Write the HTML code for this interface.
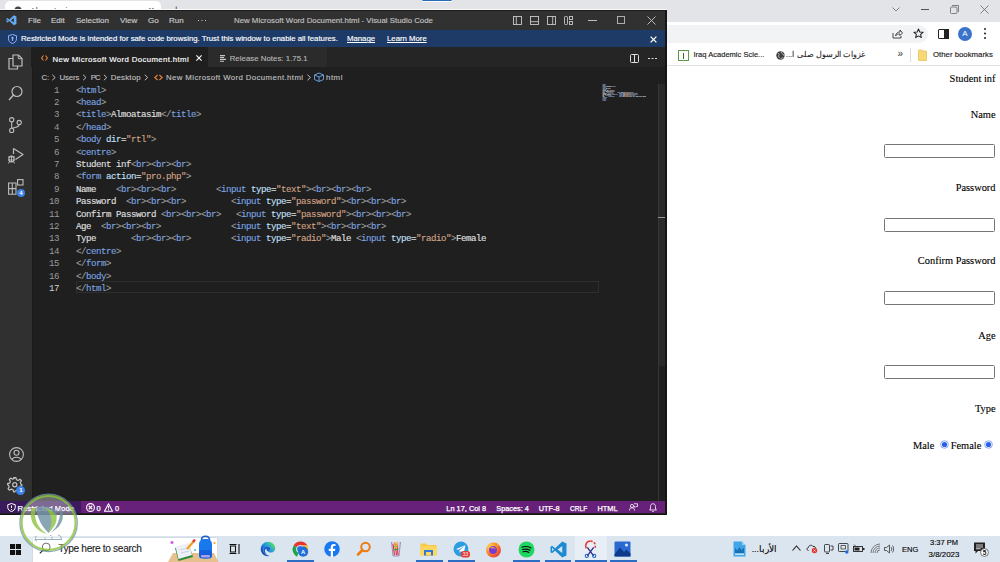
<!DOCTYPE html>
<html><head><meta charset="utf-8">
<style>
*{margin:0;padding:0;box-sizing:border-box}
html,body{width:1000px;height:562px;overflow:hidden;background:#fff;font-family:"Liberation Sans",sans-serif;position:relative}
.a{position:absolute;white-space:nowrap}
svg{position:absolute;overflow:visible}
#vsc{left:0;top:10px;width:666px;height:504px;background:#1f1f1f;overflow:hidden}
.menu,.bn,.tab,.st{-webkit-text-stroke:0.15px currentColor}
.menu{top:5px;font-size:8px;line-height:11px;color:#cccccc}
.bn{top:23px;font-size:7.77px;line-height:11px;color:#fff}
.tab{font-size:7.8px;line-height:11px;top:43.5px;color:#fff}
.bc{font-size:7.8px;line-height:11px;top:61.7px;color:#c4c4c4;-webkit-text-stroke:0.1px currentColor}
.st{font-size:7.4px;line-height:11px;top:492.5px;color:#fff;-webkit-text-stroke:0.25px #fff}
.code{position:absolute;left:76px;top:74.5px;font-family:"Liberation Mono",monospace;font-size:9.1px;letter-spacing:-0.46px;line-height:12.4px;white-space:pre;color:#e0e0e0;-webkit-text-stroke:0.12px currentColor}
.ln{position:absolute;left:39.5px;width:19.5px;top:74.5px;text-align:right;font-family:"Liberation Mono",monospace;font-size:9.1px;letter-spacing:-0.46px;line-height:12.4px;white-space:pre;color:#9a9a9a}
.t{color:#7ca5e2}.p{color:#9c9c9c}.at{color:#c4e0fa}.s{color:#d6a486}
.pg{font-family:"Liberation Serif",serif;font-size:10.4px;line-height:12px;color:#000;text-align:right;-webkit-text-stroke:0.12px #000}
.inp{left:884px;width:111px;height:13.5px;border:1px solid #767676;border-radius:1.5px;background:#fff}
.tb{font-size:7.5px;line-height:10px;color:#000;-webkit-text-stroke:0.12px #000}
</style></head><body>
<!-- CHROME -->
<div class="a" style="left:0;top:0;width:1000px;height:22px;background:#e3e4e8"></div>
<div class="a" style="left:5px;top:0.5px;width:156px;height:12px;background:#fff;border-radius:5px 5px 0 0"></div>
<svg style="left:14px;top:6px" width="8" height="8" viewBox="0 0 16 16"><circle cx="8" cy="8" r="7" fill="#444"/></svg>
<div class="a" style="left:30px;top:6px;font-size:8.5px;line-height:10px;color:#333">Almoatasim</div>
<div class="a" style="left:148px;top:6px;font-size:8px;line-height:10px;color:#333">✕</div>
<div class="a" style="left:173px;top:3px;font-size:11px;line-height:12px;color:#333">+</div>
<div class="a" style="left:667px;top:22px;width:333px;height:22px;background:#fff"></div>
<div class="a" style="left:421px;top:-3px;width:32px;height:4.5px;background:#2a6fb8;border:1px solid #fff;border-radius:2px"></div>
<div class="a" style="left:0;top:9px;width:667px;height:1px;background:#fafafa"></div>
<div class="a" style="left:667px;top:25px;width:261px;height:17.5px;background:#f1f3f4;border-radius:0 9px 9px 0"></div>
<!-- window controls -->
<svg style="left:892px;top:7px" width="8" height="5" viewBox="0 0 8 5"><path d="M0.5 0.5 L4 4 L7.5 0.5" fill="none" stroke="#777" stroke-width="0.9"/></svg>
<div class="a" style="left:921px;top:9px;width:8px;height:0.8px;background:#555"></div>
<svg style="left:950px;top:5px" width="9" height="9" viewBox="0 0 9 9"><rect x="0.5" y="2" width="6.5" height="6.5" fill="none" stroke="#666" stroke-width="0.8" rx="1"/><path d="M2 0.5 H8.5 V7" fill="none" stroke="#666" stroke-width="0.8"/></svg>
<svg style="left:980px;top:5px" width="9" height="9" viewBox="0 0 9 9"><path d="M0.5 0.5 L8.5 8.5 M8.5 0.5 L0.5 8.5" stroke="#666" stroke-width="0.8"/></svg>
<!-- toolbar icons -->
<svg style="left:892px;top:29px" width="11" height="10" viewBox="0 0 22 20"><path d="M2 8 V18 H18 V14" fill="none" stroke="#444" stroke-width="2"/><path d="M7 14 C8 8 12 6 16 6 V2 L21 8 L16 13 V10 C12 10 9 11 7 14 Z" fill="none" stroke="#444" stroke-width="2" stroke-linejoin="round"/></svg>
<svg style="left:913px;top:28px" width="11" height="11" viewBox="0 0 24 24"><path d="M12 2 L14.9 8.6 L22 9.3 L16.6 14 L18.2 21 L12 17.3 L5.8 21 L7.4 14 L2 9.3 L9.1 8.6 Z" fill="none" stroke="#222" stroke-width="2.2" stroke-linejoin="round"/></svg>
<div class="a" style="left:938px;top:29px;width:11px;height:10px;border:1.5px solid #222;border-radius:1px"></div>
<div class="a" style="left:944px;top:29px;width:5px;height:10px;background:#222"></div>
<div class="a" style="left:958px;top:27px;width:14px;height:14px;border-radius:50%;background:#3a73c9;color:#fff;font-size:8px;line-height:14px;text-align:center">A</div>
<div class="a" style="left:984px;top:28px;width:2px;height:2px;border-radius:50%;background:#222;box-shadow:0 4.5px 0 #222,0 9px 0 #222"></div>
<!-- bookmarks -->
<div class="a" style="left:667px;top:44px;width:333px;height:22px;background:#fff;border-bottom:1px solid #e3e3e3"></div>
<div class="a" style="left:678px;top:50px;width:11px;height:11px;border:1px solid #5a9a4a;background:#fff"></div>
<div class="a" style="left:683px;top:52.5px;width:1.2px;height:6px;background:#2d6a2a"></div>
<div class="a" style="left:693.5px;top:50px;font-size:7.55px;line-height:10px;color:#222;-webkit-text-stroke:0.15px #222">Iraq Academic Scie...</div>
<svg style="left:776px;top:50.8px" width="9" height="9" viewBox="0 0 20 20"><circle cx="10" cy="10" r="9.3" fill="#3c3c3c"/><path d="M4 5 C7 6 8 8 6 10 C4.5 12 7 13 8 16 M12 1.5 C11 4 13 6 15 6.5 C17 7 16.5 10 18.5 11 M11 18.5 C11.5 15.5 13.5 14 16.5 15.5" fill="none" stroke="#fff" stroke-width="1.5"/></svg>
<div class="a" style="left:790px;top:50px;font-size:8px;line-height:10px;color:#222;-webkit-text-stroke:0.1px #222;direction:rtl;width:75px;text-align:right">غزوات الرسول صلى ا...</div>
<div class="a" style="left:897.5px;top:48.5px;font-size:10px;line-height:10px;color:#333">»</div>
<div class="a" style="left:910px;top:48px;width:1px;height:14px;background:#dadce0"></div>
<svg style="left:918px;top:49px" width="9" height="12" viewBox="0 0 9 12"><path d="M0.5 1 H4 L5 2 H8.5 V11.5 H0.5 Z" fill="#f6d877" stroke="#e8c55a" stroke-width="0.8"/></svg>
<div class="a" style="left:933px;top:50px;font-size:7.8px;line-height:10px;color:#222;-webkit-text-stroke:0.15px #222">Other bookmarks</div>
<!-- page content -->
<div class="a pg" style="left:900px;width:95.5px;top:72.5px">Student inf</div>
<div class="a pg" style="left:900px;width:95.5px;top:108.5px">Name</div>
<div class="a inp" style="top:144.2px"></div>
<div class="a pg" style="left:900px;width:95.5px;top:182px">Password</div>
<div class="a pg" style="left:900px;width:95.5px;top:255.2px">Confirm Password</div>
<div class="a inp" style="top:291px"></div>
<div class="a inp" style="top:218.2px"></div>
<div class="a pg" style="left:900px;width:95.5px;top:330.4px">Age</div>
<div class="a inp" style="top:365.3px"></div>
<div class="a pg" style="left:900px;width:95.5px;top:402.6px">Type</div>
<div class="a pg" style="left:913px;top:439.7px;text-align:left">Male</div>
<div class="a pg" style="left:950.7px;top:439.7px;text-align:left">Female</div>
<svg style="left:939.5px;top:440px" width="9" height="9" viewBox="0 0 18 18"><circle cx="9" cy="9" r="8.2" fill="#7096f0"/><circle cx="9" cy="9" r="6.6" fill="#fff"/><circle cx="9" cy="9" r="5.2" fill="#2d5ee8"/></svg>
<svg style="left:983.6999999999999px;top:440px" width="9" height="9" viewBox="0 0 18 18"><circle cx="9" cy="9" r="8.2" fill="#7096f0"/><circle cx="9" cy="9" r="6.6" fill="#fff"/><circle cx="9" cy="9" r="5.2" fill="#2d5ee8"/></svg>
<!-- VSCODE -->
<div id="vsc" class="a">
  <div class="a" style="left:0;top:0;width:666px;height:20px;background:#313131;border-top:1px solid #1c1c1c"></div>
  <svg style="left:6px;top:4.7px" width="11" height="10.5" viewBox="0 0 100 100"><path d="M72 3 L97 15 V85 L72 97 L30 58 L12 72 L3 66 V34 L12 28 L30 42 Z M72 29 L45 50 L72 71 Z M12 40 V60 L23 50 Z" fill="#66acf5" fill-rule="evenodd"/></svg>
  <div class="a menu" style="left:28px">File</div>
  <div class="a menu" style="left:51px">Edit</div>
  <div class="a menu" style="left:76px">Selection</div>
  <div class="a menu" style="left:120px">View</div>
  <div class="a menu" style="left:148px">Go</div>
  <div class="a menu" style="left:169px">Run</div>
  <div class="a" style="left:197.5px;top:9.5px;width:1.3px;height:1.3px;background:#ccc;box-shadow:3.5px 0 0 #ccc,7px 0 0 #ccc"></div>
  <div class="a menu" style="left:234px;font-size:7.85px;color:#c0c0c0">New Microsoft Word Document.html - Visual Studio Code</div>
  <!-- layout icons -->
  <svg style="left:513px;top:5.5px" width="9" height="9" viewBox="0 0 9 9"><rect x="0.5" y="0.5" width="8" height="8" fill="none" stroke="#c8c8c8" stroke-width="0.9"/><path d="M3.3 0.5 V8.5" stroke="#c8c8c8" stroke-width="0.9"/></svg>
  <svg style="left:530px;top:5.5px" width="9" height="9" viewBox="0 0 9 9"><rect x="0.5" y="0.5" width="8" height="8" fill="none" stroke="#c8c8c8" stroke-width="0.9"/><path d="M0.5 5.7 H8.5" stroke="#c8c8c8" stroke-width="0.9"/></svg>
  <svg style="left:547px;top:5.5px" width="9" height="9" viewBox="0 0 9 9"><rect x="0.5" y="0.5" width="8" height="8" fill="none" stroke="#c8c8c8" stroke-width="0.9"/><path d="M5.7 0.5 V8.5" stroke="#c8c8c8" stroke-width="0.9"/></svg>
  <svg style="left:564px;top:5.5px" width="9" height="9" viewBox="0 0 9 9"><rect x="0.5" y="0.5" width="3" height="8" rx="0.8" fill="none" stroke="#c8c8c8" stroke-width="0.9"/><rect x="5.5" y="0.5" width="3" height="3" fill="none" stroke="#c8c8c8" stroke-width="0.9"/><rect x="5.5" y="5.5" width="3" height="3" fill="none" stroke="#c8c8c8" stroke-width="0.9"/></svg>
  <div class="a" style="left:588px;top:10px;width:9px;height:1px;background:#bbb"></div>
  <svg style="left:617px;top:6px" width="8" height="8" viewBox="0 0 8 8"><rect x="0.5" y="0.5" width="7" height="7" fill="none" stroke="#bbb" stroke-width="0.9"/></svg>
  <svg style="left:647px;top:5.5px" width="9" height="9" viewBox="0 0 9 9"><path d="M0.5 0.5 L8.5 8.5 M8.5 0.5 L0.5 8.5" stroke="#c8c8c8" stroke-width="0.9"/></svg>

  <!-- banner -->
  <div class="a" style="left:0;top:20px;width:666px;height:17px;background:#1e3a66"></div>
  <svg style="left:8px;top:24px" width="9" height="10" viewBox="0 0 18 20"><path d="M9 1 L17 3.5 V9.5 C17 14.5 13.5 17.5 9 19 C4.5 17.5 1 14.5 1 9.5 V3.5 Z" fill="none" stroke="#8fb0ff" stroke-width="2"/><circle cx="9" cy="8" r="2.3" fill="#8fb0ff"/><path d="M7.8 9 h2.4 v5 h-2.4z" fill="#8fb0ff"/></svg>
  <div class="a bn" style="left:21px">Restricted Mode is intended for safe code browsing. Trust this window to enable all features.</div>
  <div class="a bn" style="left:347px;text-decoration:underline">Manage</div>
  <div class="a bn" style="left:387px;text-decoration:underline">Learn More</div>
  <svg style="left:649.5px;top:25.5px" width="7" height="7" viewBox="0 0 7 7"><path d="M0.6 0.6 L6.4 6.4 M6.4 0.6 L0.6 6.4" stroke="#fff" stroke-width="1.3"/></svg>

  <!-- activity bar -->
  <div class="a" style="left:0;top:37px;width:31.5px;height:454px;background:#303030"></div><div class="a" style="left:31.5px;top:37px;width:1.2px;height:454px;background:#1a1a1a"></div>
  <svg style="left:8px;top:44px" width="15" height="16" viewBox="0 0 15 16"><path d="M5 1 H10.5 L14 4.5 V12 H5 Z" fill="none" stroke="#bdbdbd" stroke-width="1.2"/><path d="M10.3 1 V4.7 H14" fill="none" stroke="#bdbdbd" stroke-width="1"/><path d="M5 4.5 H1 V15 H9.5 V12" fill="none" stroke="#bdbdbd" stroke-width="1.2"/></svg>
  <svg style="left:8px;top:75px" width="15" height="16" viewBox="0 0 15 16"><circle cx="9" cy="6.5" r="5" fill="none" stroke="#bdbdbd" stroke-width="1.2"/><path d="M5.5 10 L1 15" stroke="#bdbdbd" stroke-width="1.3"/></svg>
  <svg style="left:8px;top:107px" width="14" height="16" viewBox="0 0 14 16"><circle cx="3.7" cy="2.7" r="2.1" fill="none" stroke="#bdbdbd" stroke-width="1.1"/><circle cx="3.7" cy="13.4" r="2.1" fill="none" stroke="#bdbdbd" stroke-width="1.1"/><circle cx="11.2" cy="5.5" r="2.1" fill="none" stroke="#bdbdbd" stroke-width="1.1"/><path d="M3.7 4.8 V11.3 M11.2 7.6 C11 10 8 10 3.9 11.5" fill="none" stroke="#bdbdbd" stroke-width="1.1"/></svg>
  <svg style="left:7px;top:137px" width="17" height="16" viewBox="0 0 17 16"><path d="M6.5 1.5 L16 7.5 L8.5 12.5" fill="none" stroke="#bdbdbd" stroke-width="1.2" stroke-linejoin="round"/><path d="M6.5 1.5 V7" stroke="#bdbdbd" stroke-width="1.2"/><ellipse cx="4.5" cy="12" rx="2.6" ry="3" fill="none" stroke="#bdbdbd" stroke-width="1.1"/><path d="M1 10 H8 M1 13 H8 M2.5 15.5 L1 16 M6.5 15.5 L8 16 M4.5 9 V15" stroke="#bdbdbd" stroke-width="0.9"/></svg>
  <svg style="left:8px;top:168px" width="16" height="17" viewBox="0 0 16 17"><path d="M0.6 5 H8 V16.2 H0.6 Z M0.6 10.6 H8 M4.3 5 V16.2" fill="none" stroke="#bdbdbd" stroke-width="1.1"/><rect x="9.6" y="1.6" width="5.4" height="5.4" fill="none" stroke="#bdbdbd" stroke-width="1.1"/></svg>
  <div class="a" style="left:16.8px;top:178.5px;width:8px;height:8px;border-radius:50%;background:#3b82e8;color:#fff;font-size:6px;line-height:8px;text-align:center;font-weight:bold">4</div>
  <svg style="left:8.5px;top:436.5px" width="15" height="15" viewBox="0 0 15 15"><circle cx="7.5" cy="7.5" r="6.9" fill="none" stroke="#bdbdbd" stroke-width="1.1"/><circle cx="7.5" cy="5.8" r="2.5" fill="none" stroke="#bdbdbd" stroke-width="1.1"/><path d="M3 12.5 C4 9.5 11 9.5 12 12.5" fill="none" stroke="#bdbdbd" stroke-width="1.1"/></svg>
  <svg style="left:7px;top:467px" width="15.5" height="15.5" viewBox="0 0 26 26"><path d="M11 1 H15 L15.8 4.5 L18.6 5.7 L21.7 3.8 L24.2 6.3 L22.3 9.4 L23.5 12.2 L25 13 V15 L21.5 15.8 L20.3 18.6 L22.2 21.7 L19.7 24.2 L16.6 22.3 L13.8 23.5 L13 25 H11 L10.2 21.5 L7.4 20.3 L4.3 22.2 L1.8 19.7 L3.7 16.6 L2.5 13.8 L1 13 V11 L4.5 10.2 L5.7 7.4 L3.8 4.3 L6.3 1.8 L9.4 3.7 L12.2 2.5 Z" fill="none" stroke="#c4c4c4" stroke-width="2" stroke-linejoin="round"/><circle cx="13" cy="13" r="3.5" fill="none" stroke="#c4c4c4" stroke-width="2"/></svg>
  <div class="a" style="left:16.3px;top:476px;width:9px;height:9px;border-radius:50%;background:#3b82e8;color:#fff;font-size:6px;line-height:9px;text-align:center;font-weight:bold">1</div>

  <!-- tabs -->
  <div class="a" style="left:30.5px;top:37px;width:636px;height:20px;background:#252526"></div>
  <div class="a" style="left:30.5px;top:37px;width:178px;height:20px;background:#1f1f1f"></div>
  <div class="a" style="left:208px;top:37px;width:118.5px;height:20px;background:#2b2b2b"></div>
  <svg style="left:40.5px;top:44.5px" width="7" height="6" viewBox="0 0 7 6"><path d="M2.5 0.5 L0.6 3 L2.5 5.5 M4.5 0.5 L6.4 3 L4.5 5.5" fill="none" stroke="#e8803a" stroke-width="1.1"/></svg>
  <div class="a tab" style="left:52.5px;letter-spacing:0.37px">New Microsoft Word Document.html</div>
  <svg style="left:196px;top:45px" width="6" height="6" viewBox="0 0 6 6"><path d="M0.4 0.4 L5.6 5.6 M5.6 0.4 L0.4 5.6" stroke="#fff" stroke-width="1.1"/></svg>
  <svg style="left:219.5px;top:44.8px" width="6" height="7" viewBox="0 0 6 7"><path d="M0 0.6 H5 M0 2.5 H4 M0 4.4 H6 M0 6.3 H4" stroke="#c8c8c8" stroke-width="1.1"/></svg>
  <div class="a tab" style="left:229.7px;top:42.8px;color:#b4b4b4;font-size:7.8px;letter-spacing:0.04px">Release Notes: 1.75.1</div>
  <svg style="left:630px;top:43.5px" width="9" height="9" viewBox="0 0 9 9"><rect x="0.5" y="0.5" width="8" height="8" rx="1" fill="none" stroke="#ddd" stroke-width="1"/><path d="M4.5 0.5 V8.5" stroke="#ddd" stroke-width="1"/></svg>
  <div class="a" style="left:648px;top:47.5px;width:1.5px;height:1.5px;background:#ddd;box-shadow:3.5px 0 0 #ddd,7px 0 0 #ddd"></div>

  <!-- breadcrumbs -->
  <div class="a bc" style="left:41.6px;letter-spacing:-0.3px">C:</div>
  <div class="a bc" style="left:59.5px;letter-spacing:-0.09px">Users</div>
  <div class="a bc" style="left:90.7px;letter-spacing:-0.8px">PC</div>
  <div class="a bc" style="left:110.8px;letter-spacing:0.18px">Desktop</div>
  <div class="a bc" style="left:166px;letter-spacing:0.4px">New Microsoft Word Document.html</div>
  <div class="a bc" style="left:326px;letter-spacing:0.55px">html</div>
  <svg style="left:0;top:0" width="666" height="100"><g fill="none" stroke="#c0c0c0" stroke-width="1"><path d="M52.3 64.8 L55.2 67.5 L52.3 70.2"/><path d="M83.1 64.8 L86 67.5 L83.1 70.2"/><path d="M103.9 64.8 L106.8 67.5 L103.9 70.2"/><path d="M144.8 64.8 L147.7 67.5 L144.8 70.2"/><path d="M307.5 64.8 L310.4 67.5 L307.5 70.2"/></g>
  <path d="M157.6 65 L154.8 67.5 L157.6 70 M159.4 65 L162.2 67.5 L159.4 70" fill="none" stroke="#e8803a" stroke-width="1.1"/>
  <path d="M319 63 L323.5 65 V69.5 L319 71.5 L314.5 69.5 V65 Z M314.5 65 L319 67 L323.5 65 M319 67 V71.5" fill="none" stroke="#6fa8ec" stroke-width="0.9"/></svg>

  <!-- editor -->
  <div class="ln">1
2
3
4
5
6
7
8
9
10
11
12
13
14
15
16
<span style="color:#d0d0d0">17</span></div>
  <div class="a" style="left:76px;top:271.2px;width:523px;height:11.5px;border:1px solid #2e2e2e"></div>
<div class="code"><span class="p">&lt;</span><span class="t">html</span><span class="p">&gt;</span>
<span class="p">&lt;</span><span class="t">head</span><span class="p">&gt;</span>
<span class="p">&lt;</span><span class="t">title</span><span class="p">&gt;</span>Almoatasim<span class="p">&lt;/</span><span class="t">title</span><span class="p">&gt;</span>
<span class="p">&lt;/</span><span class="t">head</span><span class="p">&gt;</span>
<span class="p">&lt;</span><span class="t">body</span> <span class="at">dir</span>=<span class="s">"rtl"</span><span class="p">&gt;</span>
<span class="p">&lt;</span><span class="t">centre</span><span class="p">&gt;</span>
Student inf<span class="p">&lt;</span><span class="t">br</span><span class="p">&gt;&lt;</span><span class="t">br</span><span class="p">&gt;&lt;</span><span class="t">br</span><span class="p">&gt;</span>
<span class="p">&lt;</span><span class="t">form</span> <span class="at">action</span>=<span class="s">"pro.php"</span><span class="p">&gt;</span>
Name    <span class="p">&lt;</span><span class="t">br</span><span class="p">&gt;&lt;</span><span class="t">br</span><span class="p">&gt;&lt;</span><span class="t">br</span><span class="p">&gt;</span>        <span class="p">&lt;</span><span class="t">input</span> <span class="at">type</span>=<span class="s">"text"</span><span class="p">&gt;&lt;</span><span class="t">br</span><span class="p">&gt;&lt;</span><span class="t">br</span><span class="p">&gt;&lt;</span><span class="t">br</span><span class="p">&gt;</span>
Password  <span class="p">&lt;</span><span class="t">br</span><span class="p">&gt;&lt;</span><span class="t">br</span><span class="p">&gt;&lt;</span><span class="t">br</span><span class="p">&gt;</span>         <span class="p">&lt;</span><span class="t">input</span> <span class="at">type</span>=<span class="s">"password"</span><span class="p">&gt;&lt;</span><span class="t">br</span><span class="p">&gt;&lt;</span><span class="t">br</span><span class="p">&gt;&lt;</span><span class="t">br</span><span class="p">&gt;</span>
Confirm Password <span class="p">&lt;</span><span class="t">br</span><span class="p">&gt;&lt;</span><span class="t">br</span><span class="p">&gt;&lt;</span><span class="t">br</span><span class="p">&gt;</span>   <span class="p">&lt;</span><span class="t">input</span> <span class="at">type</span>=<span class="s">"password"</span><span class="p">&gt;&lt;</span><span class="t">br</span><span class="p">&gt;&lt;</span><span class="t">br</span><span class="p">&gt;&lt;</span><span class="t">br</span><span class="p">&gt;</span>
Age  <span class="p">&lt;</span><span class="t">br</span><span class="p">&gt;&lt;</span><span class="t">br</span><span class="p">&gt;&lt;</span><span class="t">br</span><span class="p">&gt;</span>              <span class="p">&lt;</span><span class="t">input</span> <span class="at">type</span>=<span class="s">"text"</span><span class="p">&gt;&lt;</span><span class="t">br</span><span class="p">&gt;&lt;</span><span class="t">br</span><span class="p">&gt;&lt;</span><span class="t">br</span><span class="p">&gt;</span>
Type       <span class="p">&lt;</span><span class="t">br</span><span class="p">&gt;&lt;</span><span class="t">br</span><span class="p">&gt;&lt;</span><span class="t">br</span><span class="p">&gt;</span>        <span class="p">&lt;</span><span class="t">input</span> <span class="at">type</span>=<span class="s">"radio"</span><span class="p">&gt;</span>Male <span class="p">&lt;</span><span class="t">input</span> <span class="at">type</span>=<span class="s">"radio"</span><span class="p">&gt;</span>Female
<span class="p">&lt;/</span><span class="t">centre</span><span class="p">&gt;</span>
<span class="p">&lt;/</span><span class="t">form</span><span class="p">&gt;</span>
<span class="p">&lt;/</span><span class="t">body</span><span class="p">&gt;</span>
<span class="p">&lt;/</span><span class="t">html</span><span class="p">&gt;</span></div>
  <!-- minimap -->
  <svg style="left:0;top:0" width="666" height="120"><g opacity="0.8"><rect x="602.50" y="74.0" width="0.53" height="0.8" fill="#9c9c9c"/><rect x="603.03" y="74.0" width="2.12" height="0.8" fill="#7ca5e2"/><rect x="605.15" y="74.0" width="0.53" height="0.8" fill="#9c9c9c"/><rect x="602.50" y="75.0" width="0.53" height="0.8" fill="#9c9c9c"/><rect x="603.03" y="75.0" width="2.12" height="0.8" fill="#7ca5e2"/><rect x="605.15" y="75.0" width="0.53" height="0.8" fill="#9c9c9c"/><rect x="602.50" y="76.0" width="0.53" height="0.8" fill="#9c9c9c"/><rect x="603.03" y="76.0" width="2.65" height="0.8" fill="#7ca5e2"/><rect x="605.68" y="76.0" width="0.53" height="0.8" fill="#9c9c9c"/><rect x="606.21" y="76.0" width="5.30" height="0.8" fill="#d0d0d0"/><rect x="611.51" y="76.0" width="1.06" height="0.8" fill="#9c9c9c"/><rect x="612.57" y="76.0" width="2.65" height="0.8" fill="#7ca5e2"/><rect x="615.22" y="76.0" width="0.53" height="0.8" fill="#9c9c9c"/><rect x="602.50" y="77.0" width="1.06" height="0.8" fill="#9c9c9c"/><rect x="603.56" y="77.0" width="2.12" height="0.8" fill="#7ca5e2"/><rect x="605.68" y="77.0" width="0.53" height="0.8" fill="#9c9c9c"/><rect x="602.50" y="78.0" width="0.53" height="0.8" fill="#9c9c9c"/><rect x="603.03" y="78.0" width="2.12" height="0.8" fill="#7ca5e2"/><rect x="605.68" y="78.0" width="1.59" height="0.8" fill="#c4e0fa"/><rect x="607.27" y="78.0" width="0.53" height="0.8" fill="#d0d0d0"/><rect x="607.80" y="78.0" width="2.65" height="0.8" fill="#d6a486"/><rect x="610.45" y="78.0" width="0.53" height="0.8" fill="#9c9c9c"/><rect x="602.50" y="79.0" width="0.53" height="0.8" fill="#9c9c9c"/><rect x="603.03" y="79.0" width="3.18" height="0.8" fill="#7ca5e2"/><rect x="606.21" y="79.0" width="0.53" height="0.8" fill="#9c9c9c"/><rect x="602.50" y="80.0" width="3.71" height="0.8" fill="#d0d0d0"/><rect x="606.74" y="80.0" width="1.59" height="0.8" fill="#d0d0d0"/><rect x="608.33" y="80.0" width="0.53" height="0.8" fill="#9c9c9c"/><rect x="608.86" y="80.0" width="1.06" height="0.8" fill="#7ca5e2"/><rect x="609.92" y="80.0" width="1.06" height="0.8" fill="#9c9c9c"/><rect x="610.98" y="80.0" width="1.06" height="0.8" fill="#7ca5e2"/><rect x="612.04" y="80.0" width="1.06" height="0.8" fill="#9c9c9c"/><rect x="613.10" y="80.0" width="1.06" height="0.8" fill="#7ca5e2"/><rect x="614.16" y="80.0" width="0.53" height="0.8" fill="#9c9c9c"/><rect x="602.50" y="81.0" width="0.53" height="0.8" fill="#9c9c9c"/><rect x="603.03" y="81.0" width="2.12" height="0.8" fill="#7ca5e2"/><rect x="605.68" y="81.0" width="3.18" height="0.8" fill="#c4e0fa"/><rect x="608.86" y="81.0" width="0.53" height="0.8" fill="#d0d0d0"/><rect x="609.39" y="81.0" width="4.77" height="0.8" fill="#d6a486"/><rect x="614.16" y="81.0" width="0.53" height="0.8" fill="#9c9c9c"/><rect x="602.50" y="82.0" width="2.12" height="0.8" fill="#d0d0d0"/><rect x="606.74" y="82.0" width="0.53" height="0.8" fill="#9c9c9c"/><rect x="607.27" y="82.0" width="1.06" height="0.8" fill="#7ca5e2"/><rect x="608.33" y="82.0" width="1.06" height="0.8" fill="#9c9c9c"/><rect x="609.39" y="82.0" width="1.06" height="0.8" fill="#7ca5e2"/><rect x="610.45" y="82.0" width="1.06" height="0.8" fill="#9c9c9c"/><rect x="611.51" y="82.0" width="1.06" height="0.8" fill="#7ca5e2"/><rect x="612.57" y="82.0" width="0.53" height="0.8" fill="#9c9c9c"/><rect x="617.34" y="82.0" width="0.53" height="0.8" fill="#9c9c9c"/><rect x="617.87" y="82.0" width="2.65" height="0.8" fill="#7ca5e2"/><rect x="621.05" y="82.0" width="2.12" height="0.8" fill="#c4e0fa"/><rect x="623.17" y="82.0" width="0.53" height="0.8" fill="#d0d0d0"/><rect x="623.70" y="82.0" width="3.18" height="0.8" fill="#d6a486"/><rect x="626.88" y="82.0" width="1.06" height="0.8" fill="#9c9c9c"/><rect x="627.94" y="82.0" width="1.06" height="0.8" fill="#7ca5e2"/><rect x="629.00" y="82.0" width="1.06" height="0.8" fill="#9c9c9c"/><rect x="630.06" y="82.0" width="1.06" height="0.8" fill="#7ca5e2"/><rect x="631.12" y="82.0" width="1.06" height="0.8" fill="#9c9c9c"/><rect x="632.18" y="82.0" width="1.06" height="0.8" fill="#7ca5e2"/><rect x="633.24" y="82.0" width="0.53" height="0.8" fill="#9c9c9c"/><rect x="602.50" y="83.0" width="4.24" height="0.8" fill="#d0d0d0"/><rect x="607.80" y="83.0" width="0.53" height="0.8" fill="#9c9c9c"/><rect x="608.33" y="83.0" width="1.06" height="0.8" fill="#7ca5e2"/><rect x="609.39" y="83.0" width="1.06" height="0.8" fill="#9c9c9c"/><rect x="610.45" y="83.0" width="1.06" height="0.8" fill="#7ca5e2"/><rect x="611.51" y="83.0" width="1.06" height="0.8" fill="#9c9c9c"/><rect x="612.57" y="83.0" width="1.06" height="0.8" fill="#7ca5e2"/><rect x="613.63" y="83.0" width="0.53" height="0.8" fill="#9c9c9c"/><rect x="618.93" y="83.0" width="0.53" height="0.8" fill="#9c9c9c"/><rect x="619.46" y="83.0" width="2.65" height="0.8" fill="#7ca5e2"/><rect x="622.64" y="83.0" width="2.12" height="0.8" fill="#c4e0fa"/><rect x="624.76" y="83.0" width="0.53" height="0.8" fill="#d0d0d0"/><rect x="625.29" y="83.0" width="5.30" height="0.8" fill="#d6a486"/><rect x="630.59" y="83.0" width="1.06" height="0.8" fill="#9c9c9c"/><rect x="631.65" y="83.0" width="1.06" height="0.8" fill="#7ca5e2"/><rect x="632.71" y="83.0" width="1.06" height="0.8" fill="#9c9c9c"/><rect x="633.77" y="83.0" width="1.06" height="0.8" fill="#7ca5e2"/><rect x="634.83" y="83.0" width="1.06" height="0.8" fill="#9c9c9c"/><rect x="635.89" y="83.0" width="1.06" height="0.8" fill="#7ca5e2"/><rect x="636.95" y="83.0" width="0.53" height="0.8" fill="#9c9c9c"/><rect x="602.50" y="84.0" width="3.71" height="0.8" fill="#d0d0d0"/><rect x="606.74" y="84.0" width="4.24" height="0.8" fill="#d0d0d0"/><rect x="611.51" y="84.0" width="0.53" height="0.8" fill="#9c9c9c"/><rect x="612.04" y="84.0" width="1.06" height="0.8" fill="#7ca5e2"/><rect x="613.10" y="84.0" width="1.06" height="0.8" fill="#9c9c9c"/><rect x="614.16" y="84.0" width="1.06" height="0.8" fill="#7ca5e2"/><rect x="615.22" y="84.0" width="1.06" height="0.8" fill="#9c9c9c"/><rect x="616.28" y="84.0" width="1.06" height="0.8" fill="#7ca5e2"/><rect x="617.34" y="84.0" width="0.53" height="0.8" fill="#9c9c9c"/><rect x="619.46" y="84.0" width="0.53" height="0.8" fill="#9c9c9c"/><rect x="619.99" y="84.0" width="2.65" height="0.8" fill="#7ca5e2"/><rect x="623.17" y="84.0" width="2.12" height="0.8" fill="#c4e0fa"/><rect x="625.29" y="84.0" width="0.53" height="0.8" fill="#d0d0d0"/><rect x="625.82" y="84.0" width="5.30" height="0.8" fill="#d6a486"/><rect x="631.12" y="84.0" width="1.06" height="0.8" fill="#9c9c9c"/><rect x="632.18" y="84.0" width="1.06" height="0.8" fill="#7ca5e2"/><rect x="633.24" y="84.0" width="1.06" height="0.8" fill="#9c9c9c"/><rect x="634.30" y="84.0" width="1.06" height="0.8" fill="#7ca5e2"/><rect x="635.36" y="84.0" width="1.06" height="0.8" fill="#9c9c9c"/><rect x="636.42" y="84.0" width="1.06" height="0.8" fill="#7ca5e2"/><rect x="637.48" y="84.0" width="0.53" height="0.8" fill="#9c9c9c"/><rect x="602.50" y="85.0" width="1.59" height="0.8" fill="#d0d0d0"/><rect x="605.15" y="85.0" width="0.53" height="0.8" fill="#9c9c9c"/><rect x="605.68" y="85.0" width="1.06" height="0.8" fill="#7ca5e2"/><rect x="606.74" y="85.0" width="1.06" height="0.8" fill="#9c9c9c"/><rect x="607.80" y="85.0" width="1.06" height="0.8" fill="#7ca5e2"/><rect x="608.86" y="85.0" width="1.06" height="0.8" fill="#9c9c9c"/><rect x="609.92" y="85.0" width="1.06" height="0.8" fill="#7ca5e2"/><rect x="610.98" y="85.0" width="0.53" height="0.8" fill="#9c9c9c"/><rect x="618.93" y="85.0" width="0.53" height="0.8" fill="#9c9c9c"/><rect x="619.46" y="85.0" width="2.65" height="0.8" fill="#7ca5e2"/><rect x="622.64" y="85.0" width="2.12" height="0.8" fill="#c4e0fa"/><rect x="624.76" y="85.0" width="0.53" height="0.8" fill="#d0d0d0"/><rect x="625.29" y="85.0" width="3.18" height="0.8" fill="#d6a486"/><rect x="628.47" y="85.0" width="1.06" height="0.8" fill="#9c9c9c"/><rect x="629.53" y="85.0" width="1.06" height="0.8" fill="#7ca5e2"/><rect x="630.59" y="85.0" width="1.06" height="0.8" fill="#9c9c9c"/><rect x="631.65" y="85.0" width="1.06" height="0.8" fill="#7ca5e2"/><rect x="632.71" y="85.0" width="1.06" height="0.8" fill="#9c9c9c"/><rect x="633.77" y="85.0" width="1.06" height="0.8" fill="#7ca5e2"/><rect x="634.83" y="85.0" width="0.53" height="0.8" fill="#9c9c9c"/><rect x="602.50" y="86.0" width="2.12" height="0.8" fill="#d0d0d0"/><rect x="608.33" y="86.0" width="0.53" height="0.8" fill="#9c9c9c"/><rect x="608.86" y="86.0" width="1.06" height="0.8" fill="#7ca5e2"/><rect x="609.92" y="86.0" width="1.06" height="0.8" fill="#9c9c9c"/><rect x="610.98" y="86.0" width="1.06" height="0.8" fill="#7ca5e2"/><rect x="612.04" y="86.0" width="1.06" height="0.8" fill="#9c9c9c"/><rect x="613.10" y="86.0" width="1.06" height="0.8" fill="#7ca5e2"/><rect x="614.16" y="86.0" width="0.53" height="0.8" fill="#9c9c9c"/><rect x="618.93" y="86.0" width="0.53" height="0.8" fill="#9c9c9c"/><rect x="619.46" y="86.0" width="2.65" height="0.8" fill="#7ca5e2"/><rect x="622.64" y="86.0" width="2.12" height="0.8" fill="#c4e0fa"/><rect x="624.76" y="86.0" width="0.53" height="0.8" fill="#d0d0d0"/><rect x="625.29" y="86.0" width="3.71" height="0.8" fill="#d6a486"/><rect x="629.00" y="86.0" width="0.53" height="0.8" fill="#9c9c9c"/><rect x="629.53" y="86.0" width="2.12" height="0.8" fill="#d0d0d0"/><rect x="632.18" y="86.0" width="0.53" height="0.8" fill="#9c9c9c"/><rect x="632.71" y="86.0" width="2.65" height="0.8" fill="#7ca5e2"/><rect x="635.89" y="86.0" width="2.12" height="0.8" fill="#c4e0fa"/><rect x="638.01" y="86.0" width="0.53" height="0.8" fill="#d0d0d0"/><rect x="638.54" y="86.0" width="3.71" height="0.8" fill="#d6a486"/><rect x="642.25" y="86.0" width="0.53" height="0.8" fill="#9c9c9c"/><rect x="642.78" y="86.0" width="3.18" height="0.8" fill="#d0d0d0"/><rect x="602.50" y="87.0" width="1.06" height="0.8" fill="#9c9c9c"/><rect x="603.56" y="87.0" width="3.18" height="0.8" fill="#7ca5e2"/><rect x="606.74" y="87.0" width="0.53" height="0.8" fill="#9c9c9c"/><rect x="602.50" y="88.0" width="1.06" height="0.8" fill="#9c9c9c"/><rect x="603.56" y="88.0" width="2.12" height="0.8" fill="#7ca5e2"/><rect x="605.68" y="88.0" width="0.53" height="0.8" fill="#9c9c9c"/><rect x="602.50" y="89.0" width="1.06" height="0.8" fill="#9c9c9c"/><rect x="603.56" y="89.0" width="2.12" height="0.8" fill="#7ca5e2"/><rect x="605.68" y="89.0" width="0.53" height="0.8" fill="#9c9c9c"/><rect x="602.50" y="90.0" width="1.06" height="0.8" fill="#9c9c9c"/><rect x="603.56" y="90.0" width="2.12" height="0.8" fill="#7ca5e2"/><rect x="605.68" y="90.0" width="0.53" height="0.8" fill="#9c9c9c"/></g></svg>
  <div class="a" style="left:657.5px;top:74px;width:8px;height:417px;background:#1f1f1f;border-left:1px solid #363636"></div><div class="a" style="left:658.5px;top:74px;width:7px;height:282px;background:#2a2a2a"></div>
  <div class="a" style="left:658px;top:206.5px;width:8px;height:1.5px;background:#9a9a9a"></div>

  <!-- status bar -->
  <div class="a" style="left:0;top:490.7px;width:666px;height:12.8px;background:#68217a"></div>
  <div class="a" style="left:0;top:490.7px;width:80.5px;height:12.8px;background:#3b1a5c"></div>
  <svg style="left:7px;top:492.5px" width="9" height="9" viewBox="0 0 18 18"><path d="M9 1 L16.5 3.5 V8.5 C16.5 13 13 16 9 17 C5 16 1.5 13 1.5 8.5 V3.5 Z" fill="none" stroke="#fff" stroke-width="2"/><path d="M8 5 h2 v5 h-2z M8 12 h2 v2 h-2z" fill="#fff"/></svg>
  <div class="a st" style="left:17.6px;font-size:7.76px">Restricted Mode</div>
  <svg style="left:86px;top:492.5px" width="9" height="9" viewBox="0 0 18 18"><circle cx="9" cy="9" r="7.8" fill="none" stroke="#fff" stroke-width="2.2"/><path d="M5.5 5.5 L12.5 12.5 M12.5 5.5 L5.5 12.5" stroke="#fff" stroke-width="2.2"/></svg>
  <div class="a st" style="left:96.5px">0</div>
  <svg style="left:104px;top:492.5px" width="9" height="9" viewBox="0 0 18 18"><path d="M9 1.5 L17 16.5 H1 Z" fill="none" stroke="#fff" stroke-width="2.2" stroke-linejoin="round"/><path d="M8 6 h2 v5 h-2z M8 12.5 h2 v2 h-2z" fill="#fff"/></svg>
  <div class="a st" style="left:115px">0</div>
  <div class="a st" style="left:446.3px">Ln 17, Col 8</div>
  <div class="a st" style="left:496.3px;font-size:7.3px">Spaces: 4</div>
  <div class="a st" style="left:538.8px;font-size:7.3px">UTF-8</div>
  <div class="a st" style="left:570px;font-size:6.6px">CRLF</div>
  <div class="a st" style="left:597.5px;font-size:7.35px">HTML</div>
  <svg style="left:628.7px;top:492.5px" width="9" height="9" viewBox="0 0 18 18"><circle cx="6" cy="6" r="3.2" fill="none" stroke="#fff" stroke-width="1.6"/><path d="M1 15 C1 10.5 3 9.5 6 9.5 C9 9.5 11 10.5 11 15" fill="none" stroke="#fff" stroke-width="1.6"/><path d="M10 1.5 H17 V7 H14 L12 9 V7 H10" fill="none" stroke="#fff" stroke-width="1.5"/></svg>
  <svg style="left:648.5px;top:492.5px" width="8" height="9" viewBox="0 0 16 18"><path d="M3 12 V7 C3 3.5 5 1.5 8 1.5 C11 1.5 13 3.5 13 7 V12 L15 14 H1 Z" fill="none" stroke="#fff" stroke-width="1.6" stroke-linejoin="round"/><path d="M6 16 C6.5 17.3 9.5 17.3 10 16" fill="none" stroke="#fff" stroke-width="1.6"/></svg>
</div>
<div class="a" style="left:665px;top:10px;width:2px;height:504.5px;background:#161616"></div><div class="a" style="left:0;top:513.5px;width:667px;height:1px;background:#161616"></div>
<!-- TASKBAR -->
<div class="a" style="left:0;top:535.5px;width:1000px;height:26.5px;background:#dbe5ef"></div>
<svg style="left:10px;top:543.5px" width="11" height="11" viewBox="0 0 11 11"><path d="M0 0 H5.1 V5.1 H0 Z M5.9 0 H11 V5.1 H5.9 Z M0 5.9 H5.1 V11 H0 Z M5.9 5.9 H11 V11 H5.9 Z" fill="#111"/></svg>
<div class="a" style="left:31.5px;top:536.5px;width:186px;height:25.5px;background:#fff;border:1px solid #d5dbe2;border-bottom:none"></div>
<svg style="left:38.5px;top:542px" width="12" height="12" viewBox="0 0 12 12"><circle cx="7.2" cy="5" r="3.9" fill="none" stroke="#222" stroke-width="1"/><path d="M4.4 7.8 L0.8 11.4" stroke="#222" stroke-width="1.1"/></svg>
<div class="a" style="left:58.2px;top:543.2px;font-size:10.2px;line-height:12px;color:#1a1a1a;letter-spacing:-0.35px;-webkit-text-stroke:0.1px #1a1a1a">Type here to search</div>
<!-- search illustration -->
<svg style="left:160px;top:530px" width="60" height="32" viewBox="0 0 60 32"><path d="M8 32 L13 23 H54 L58.5 32 Z" fill="#e6c08e"/><path d="M15 18 L29 14 L33 27 L18.5 31 Z" fill="#2f8a3a"/><path d="M15.5 16.5 L29 13 L32 25 L18.5 29 Z" fill="#eef0f8"/><path d="M20 20 L28 18 M21 23 L29 21" stroke="#c0c8e0" stroke-width="0.8"/><path d="M27 19 L34 11" stroke="#f0a020" stroke-width="2.4"/><path d="M33 12 L35 9.5" stroke="#e04040" stroke-width="2.4"/><path d="M10.5 12.5 L13.5 12.5 M12 11 L12 14" stroke="#d050e0" stroke-width="1.4"/><circle cx="54.5" cy="13" r="1.1" fill="#f0a020"/><circle cx="35" cy="20" r="0.9" fill="#40b0d0"/><path d="M41.5 10 C41.5 5 49.5 5 49.5 10" fill="none" stroke="#1f5fc8" stroke-width="1.6"/><rect x="39" y="9" width="13" height="19.5" rx="5" fill="#1a78ee"/><rect x="39" y="20" width="13" height="8.5" rx="3" fill="#1560d8"/><rect x="41" y="25" width="9" height="2.5" rx="1" fill="#a8a0f0"/></svg>
<!-- task view -->
<svg style="left:229px;top:544px" width="11" height="10" viewBox="0 0 11 10"><path d="M0.5 0.5 H7.5 M0.5 9.5 H7.5 M1.5 2 H6.5 V8 H1.5 Z M10 0 V10" fill="none" stroke="#111" stroke-width="1.1"/></svg>
<!-- edge -->
<svg style="left:259.5px;top:541px" width="16" height="16" viewBox="0 0 32 32"><defs><linearGradient id="eg1" x1="0.95" y1="0.3" x2="0.2" y2="0.95"><stop offset="0" stop-color="#52d86a"/><stop offset="0.35" stop-color="#25a3dc"/><stop offset="0.7" stop-color="#1670d4"/><stop offset="1" stop-color="#0d3b98"/></linearGradient></defs><path d="M16 1.5 C24.5 1.5 30.5 7.5 30.5 14.5 C30.5 19.5 27 23 22 23 C19 23 17 22 16 20.5 C18 20.5 20.5 19 20.5 16 C20.5 12.5 17.5 10.5 14 10.5 C9.5 10.5 6.5 14 6.5 18 C6.5 24 12 29 19 29.5 C17.5 30.3 16.5 30.5 16 30.5 C8 30.5 1.5 24 1.5 16 C1.5 8 8 1.5 16 1.5 Z" fill="url(#eg1)"/><path d="M6.5 18 C6.5 14 9.5 10.5 14 10.5 C17.5 10.5 20.5 12.5 20.5 16 C20.5 19 18 20.5 16 20.5 C14 20.5 12.5 19.5 12.5 18 C12.5 16.5 13.5 15.5 13.5 15.5 C10 16 9 20 11 24 C13 27.5 16 29 19 29.5 C12 29 6.5 24 6.5 18 Z" fill="#1a5fc8"/><path d="M13.5 15.5 C12.5 16.5 12.5 17.5 12.5 18 C12.5 19.5 14 20.5 16 20.5 C15 21.5 12 21 11.3 19 C10.8 17.5 12 16 13.5 15.5 Z" fill="#fff"/></svg>
<!-- chrome -->
<svg style="left:292px;top:541px" width="17" height="17" viewBox="0 0 32 32"><path d="M16 1 A15 15 0 0 1 29 8.5 H16 A7.5 7.5 0 0 0 9.5 12.2 L3 8.5 A15 15 0 0 1 16 1 Z" fill="#e8352c"/><path d="M3 8.5 L9.5 12.2 A7.5 7.5 0 0 0 12.2 22.5 L9.5 29.5 A15 15 0 0 1 3 8.5 Z" fill="#1ea446"/><path d="M29 8.5 A15 15 0 0 1 30 20 L22 20 A7.5 7.5 0 0 0 16 8.5 Z" fill="#f7c01a"/><circle cx="15" cy="15" r="6.5" fill="#2a72e0" stroke="#fff" stroke-width="1.5"/><circle cx="21" cy="20" r="9.5" fill="#1e6fd9"/><text x="21" y="25" font-size="11" fill="#fff" text-anchor="middle" font-family="Liberation Sans" font-weight="bold">A</text></svg>
<div class="a" style="left:287px;top:560px;width:26.5px;height:2px;background:#2b6cc4"></div>
<!-- facebook -->
<svg style="left:324px;top:541px" width="16" height="16" viewBox="0 0 32 32"><circle cx="16" cy="16" r="15.5" fill="#1877f2"/><path d="M18 32 V20 H22 L22.7 15.5 H18 V12.5 C18 11 18.7 10 20.5 10 H23 V6.3 C22 6.1 20.7 6 19.3 6 C15.8 6 13.6 8 13.6 12 V15.5 H9.5 V20 H13.6 V32 Z" fill="#fff"/></svg>
<!-- search orange -->
<svg style="left:356px;top:541px" width="16" height="16" viewBox="0 0 32 32"><circle cx="19" cy="12" r="8.5" fill="none" stroke="#f07a10" stroke-width="4"/><path d="M13 18 L4 27" stroke="#f07a10" stroke-width="5" stroke-linecap="round"/></svg>
<!-- winrar-ish -->
<svg style="left:390px;top:540px" width="12" height="18" viewBox="0 0 24 36"><path d="M3 4 L6 32 H18 L21 4" fill="#d9c9e6" stroke="#7a5aa0" stroke-width="1.2"/><path d="M6 8 L9 30 M10 6 L13 30 M14 8 L16 30" stroke="#e03030" stroke-width="2"/><path d="M8 14 L16 12 M7 20 L17 18" stroke="#30a040" stroke-width="2"/><path d="M9 4 L11 16 M15 3 L13 17" stroke="#f0c020" stroke-width="2"/></svg>
<!-- file explorer -->
<svg style="left:420px;top:542px" width="17" height="14" viewBox="0 0 34 28"><path d="M1 3 H12 L15 6 H33 V27 H1 Z" fill="#f7c948"/><path d="M1 9 H33 V27 H1 Z" fill="#ffd75e"/><rect x="8" y="16" width="18" height="11" fill="#2f7ad8"/><rect x="12" y="20" width="10" height="7" fill="#ffd75e"/></svg>
<div class="a" style="left:416px;top:560px;width:26.5px;height:2px;background:#2b6cc4"></div>
<!-- telegram -->
<svg style="left:452.5px;top:541px" width="17" height="17" viewBox="0 0 32 32"><circle cx="15" cy="15" r="14" fill="#2a9ee0"/><path d="M7 14.5 L22 8.5 C22.8 8.2 23.4 8.6 23.1 9.8 L20.5 21.5 C20.3 22.4 19.7 22.6 19 22.2 L15 19.3 L13 21.2 C12.8 21.4 12.6 21.6 12.2 21.6 L12.5 17.5 L20 10.8 C20.3 10.5 19.9 10.4 19.5 10.6 L10.2 16.5 L6.3 15.3 C5.5 15 5.5 14.9 7 14.5 Z" fill="#fff"/><rect x="15" y="19" width="17" height="12" rx="5" fill="#e53935"/><text x="23.5" y="28.5" font-size="9" fill="#fff" text-anchor="middle" font-family="Liberation Sans">33</text></svg>
<div class="a" style="left:448.4px;top:560px;width:26.5px;height:2px;background:#2b6cc4"></div>
<!-- firefox -->
<svg style="left:485px;top:541px" width="17" height="17" viewBox="0 0 32 32"><defs><radialGradient id="ffg" cx="0.3" cy="0.3" r="0.9"><stop offset="0" stop-color="#ffe050"/><stop offset="0.45" stop-color="#ff8a20"/><stop offset="1" stop-color="#e0204a"/></radialGradient></defs><circle cx="16" cy="17" r="14" fill="url(#ffg)"/><circle cx="15" cy="17" r="7.5" fill="#7a3ad8"/><path d="M10 12 C14 10 20 12 21 17 C20 14 16 13 13 14 Z" fill="#ffb030"/><path d="M22 2 C26 6 24 10 22 12 C24 8 23 5 22 2 Z" fill="#ffcc40"/></svg>
<!-- spotify -->
<svg style="left:518px;top:541px" width="17" height="17" viewBox="0 0 32 32"><circle cx="16" cy="16" r="15" fill="#1ed760"/><path d="M7.5 11.5 C13 9.8 19.5 10.3 24.5 13 M8.5 16 C13 14.7 18.5 15.2 22.5 17.5 M9.5 20.3 C13 19.3 17.5 19.7 20.5 21.5" fill="none" stroke="#111" stroke-width="2.2" stroke-linecap="round"/></svg>
<div class="a" style="left:513px;top:560px;width:26.5px;height:2px;background:#2b6cc4"></div>
<!-- vscode -->
<svg style="left:550px;top:541px" width="17" height="17" viewBox="0 0 100 100"><path d="M72 3 L97 15 V85 L72 97 L30 58 L12 72 L3 66 V34 L12 28 L30 42 Z M72 29 L45 50 L72 71 Z M12 40 V60 L23 50 Z" fill="#1f8ad2" fill-rule="evenodd"/></svg>
<div class="a" style="left:545px;top:560px;width:26px;height:2px;background:#2b6cc4"></div>
<!-- snip -->
<div class="a" style="left:575px;top:536px;width:31.5px;height:26px;background:#e8eef5"></div>
<svg style="left:582px;top:540px" width="17" height="18" viewBox="0 0 32 34"><path d="M16 2 C8 2 5 10 8 16" fill="none" stroke="#e53935" stroke-width="3"/><path d="M16 2 C24 2 27 10 24 16" fill="none" stroke="#e53935" stroke-width="3" stroke-dasharray="4 3"/><path d="M10 14 L22 30 M22 14 L10 30" stroke="#2e2e8a" stroke-width="2.5"/><circle cx="9" cy="30" r="3" fill="none" stroke="#1e5fc0" stroke-width="2"/><circle cx="23" cy="30" r="3" fill="none" stroke="#1e5fc0" stroke-width="2"/></svg>
<div class="a" style="left:575px;top:560px;width:31.5px;height:2px;background:#2b6cc4"></div>
<!-- photos -->
<svg style="left:614px;top:541px" width="17" height="16" viewBox="0 0 34 32"><rect x="1" y="1" width="32" height="30" rx="2" fill="#2a6ad0"/><path d="M1 27 L12 13 L20 22 L25 17 L33 25 V31 H1 Z" fill="#0d3a8a"/><circle cx="25" cy="8" r="3" fill="#e0f0ff"/></svg>
<div class="a" style="left:610.4px;top:560px;width:26.5px;height:2px;background:#2b6cc4"></div>
<!-- tray -->
<svg style="left:732.5px;top:541px" width="13" height="16" viewBox="0 0 26 32"><path d="M1 1 H18 L25 8 V31 H1 Z" fill="#41a6e8"/><path d="M18 1 V8 H25" fill="#9ad0f5"/><path d="M4 24 V14 L9 19 L13 12 L17 18 L22 13 V24 Z" fill="#1670b8"/><rect x="4" y="25" width="18" height="3" fill="#bfe3fa"/></svg>
<div class="a tb" style="left:750.8px;top:544px;font-size:8.5px;direction:rtl;width:26px;text-align:right">الأربا...</div>
<svg style="left:792px;top:545px" width="9" height="6" viewBox="0 0 9 6"><path d="M0.5 5.5 L4.5 1 L8.5 5.5" fill="none" stroke="#222" stroke-width="1.1"/></svg>
<svg style="left:806px;top:542px" width="12" height="12" viewBox="0 0 24 24"><path d="M5 17 C1 17 1 11 5 11 C5 6 12 5 14 9 C17 8 20 10 19 13" fill="none" stroke="#333" stroke-width="2"/><circle cx="17" cy="17" r="5.5" fill="#e53935"/><path d="M15 15 L19 19 M19 15 L15 19" stroke="#fff" stroke-width="1.3"/></svg>
<svg style="left:824px;top:543px" width="10" height="11" viewBox="0 0 20 22"><rect x="1" y="3" width="10" height="15" rx="1.5" fill="none" stroke="#333" stroke-width="1.8"/><path d="M13 6 H18 V14 H13 M4 21 H10" fill="none" stroke="#333" stroke-width="1.8"/></svg>
<svg style="left:838px;top:543px" width="11" height="11" viewBox="0 0 22 22"><rect x="1" y="1" width="19" height="16" rx="1.5" fill="none" stroke="#333" stroke-width="1.8"/><path d="M6 5 H15 V12 H6 Z" fill="none" stroke="#333" stroke-width="1.5"/><circle cx="17.5" cy="18" r="3.5" fill="#1e6fd8"/></svg>
<svg style="left:853px;top:544px" width="12" height="9" viewBox="0 0 24 18"><rect x="1" y="5" width="18" height="10" fill="none" stroke="#222" stroke-width="1.8"/><rect x="3" y="7" width="10" height="6" fill="#222"/><path d="M20 8 H23 V12 H20" fill="#222"/><path d="M2 1 L5 4" stroke="#222" stroke-width="1.5"/></svg>
<svg style="left:870px;top:543px" width="11" height="11" viewBox="0 0 22 22"><path d="M2 20 A18 18 0 0 1 20 2 M6 20 A14 14 0 0 1 20 6 M10 20 A10 10 0 0 1 20 10 M14 20 A6 6 0 0 1 20 14" fill="none" stroke="#555" stroke-width="1.5"/></svg>
<svg style="left:884px;top:543.5px" width="11" height="10" viewBox="0 0 22 20"><path d="M1 7 H5 L11 2 V18 L5 13 H1 Z" fill="none" stroke="#333" stroke-width="1.6"/><path d="M14 6 C16 8 16 12 14 14 M17 3 C20 7 20 13 17 17" fill="none" stroke="#333" stroke-width="1.5"/></svg>
<div class="a tb" style="left:902px;top:544.5px;font-size:7.5px">ENG</div>
<div class="a tb" style="left:930px;top:537.5px;font-size:7.5px">3:37 PM</div>
<div class="a tb" style="left:928.6px;top:549.5px;font-size:7.9px">3/8/2023</div>
<svg style="left:973px;top:541px" width="16" height="16" viewBox="0 0 32 32"><path d="M2 3 H24 V20 H10 L5 25 V20 H2 Z" fill="#222"/><path d="M6 8 H20 M6 12 H20 M6 15.5 H15" stroke="#fff" stroke-width="1.6"/><circle cx="23" cy="23" r="7.8" fill="#fff" stroke="#333" stroke-width="1.3"/><text x="23" y="28" font-size="13" fill="#111" text-anchor="middle" font-family="Liberation Sans" font-weight="bold">5</text></svg>
<!-- watermark logo -->
<svg style="left:0;top:0" width="1000" height="562">
<circle cx="48.6" cy="522.9" r="27.5" fill="#fff" opacity="0.35"/>
<g opacity="0.8">
<circle cx="48.6" cy="522.9" r="28.6" fill="none" stroke="#7090a8" stroke-width="1.4"/>
<circle cx="48.6" cy="522.9" r="27" fill="none" stroke="#8cc43e" stroke-width="2.2"/>
<path d="M32 508 C28.5 518 33 530 47 534 C37 528 33.5 518 35.5 508 Z" fill="#8cc43e"/>
<path d="M36.5 507 C42 505 52 507 56.5 511 C57.5 520 53.5 528 48.5 533 C41 526 36.5 516 36.5 507 Z" fill="#6e8fa3"/>
<path d="M45 508 C52 509.5 57 514 56.5 520 C55.5 526 51.5 530 48.5 532 C53 524 52.5 514 45 508 Z" fill="#8cc43e"/>
<path d="M60 506.5 C65.5 515 63.5 526 51 532.5 C58.5 526 61 516 60 506.5 Z" fill="#6e8fa3"/>
<path d="M34.5 539.5 H62 M36 536 C35 540 35 541 37 541 M45 537.5 V539.5 M52 537 V539.5 M58 535 C62 536 62 539 60 539.5 M50 535.5 h1.2" stroke="#7f9cb0" stroke-width="1" fill="none"/>
</g>
</svg>
</body></html>
